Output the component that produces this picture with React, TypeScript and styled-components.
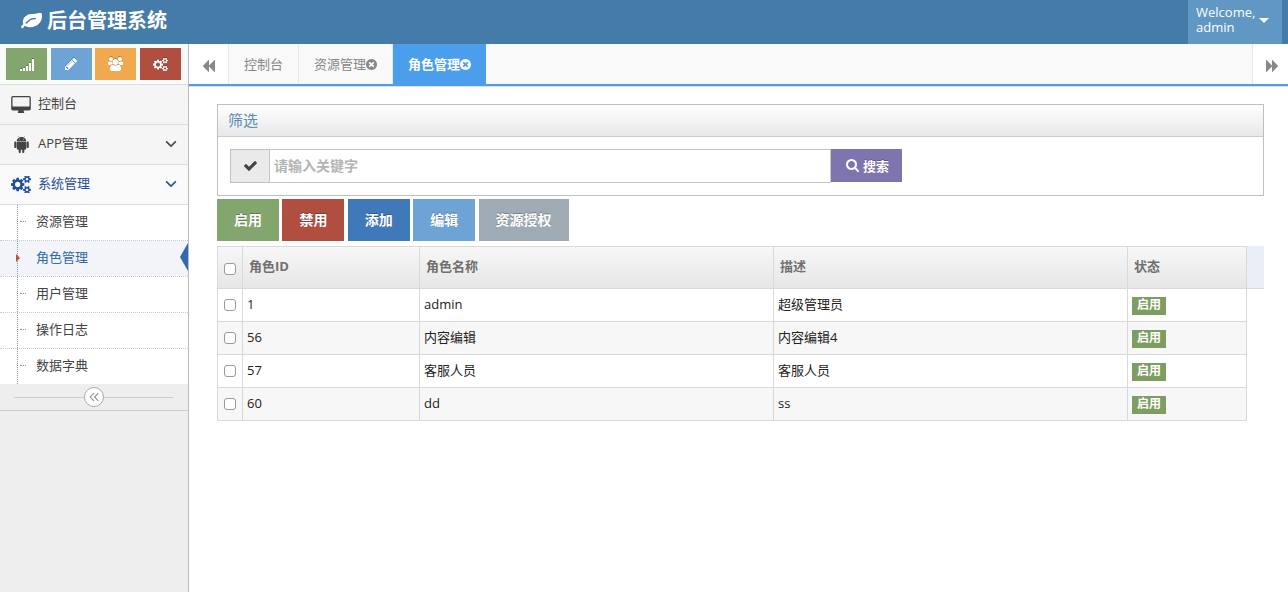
import React, { useState } from "react";
import styled, { createGlobalStyle, css } from "styled-components";

const GlobalStyle = createGlobalStyle`
  *, *::before, *::after { box-sizing: border-box; }
  body {
    margin: 0;
    background: #fff;
    color: #393939;
    font: 13px/20px "Open Sans", "Noto Sans CJK SC", sans-serif;
  }
  button, input { font: inherit; }
  button { border: 0; padding: 0; cursor: pointer; }
  a { color: inherit; text-decoration: none; }
  ul { list-style: none; margin: 0; padding: 0; }
`;

/* ---------- icons ---------- */

const icons = {
  leaf: {
    box: "0 256 1792 1408",
    d: "M1280 704q0-26-19-45t-45-19q-172 0-318 49.5t-259.5 134-235.5 219.5q-19 21-19 45 0 26 19 45t45 19q24 0 45-19 27-24 74-71t67-66q137-124 268.5-176t313.5-52q26 0 45-19t19-45zm512-198q0 95-20 193-46 224-184.5 383t-357.5 268q-214 108-438 108-148 0-286-47-15-5-88-42t-96-37q-16 0-39.5 32t-45 70-52.5 70-60 32q-43 0-63.5-17.5t-45.5-59.5q-2-4-6-11t-5.5-10-3-9.5-1.5-13.5q0-35 31-73.5t68-65.5 68-56 31-48q0-4-14-38t-16-44q-9-51-9-104 0-115 43.5-220t119-184.5 170.5-139 204-95.5q55-18 145-25.5t179.5-9 178.5-6 163.5-24 113.5-56.5l29.5-29.5 29.5-28 27-20 36.5-16 43.5-4.5q39 0 70.5 46t47.5 112 24 124 8 96z",
  },
  signal: {
    box: "0 0 14 13",
    d: "M0 11h2v2h-2zM3 10h2v3h-2zM6 8h2v5h-2zM9 5h2v8h-2zM12 1h2v12h-2z",
  },
  pencil: {
    box: "128 149 1515 1515",
    d: "M491 1536l91-91-235-235-91 91v107h128v128h107zm523-928q0-22-22-22-10 0-17 7l-542 542q-7 7-7 17 0 22 22 22 10 0 17-7l542-542q7-7 7-17zm-54-192l416 416-832 832h-416v-416zm683 96q0 53-37 90l-166 166-416-416 166-165q36-38 90-38 53 0 91 38l235 234q37 39 37 91z",
  },
  users: {
    box: "0 0 1920 1792",
    d: "M593 896q-162 5-265 128h-134q-82 0-138-40.5t-56-118.5q0-353 124-353 6 0 43.5 21t97.5 42.5 119 21.5q67 0 133-23-5 37-5 66 0 139 81 256zm1071 637q0 120-73 189.5t-194 69.5h-874q-121 0-194-69.5t-73-189.5q0-53 3.5-103.5t14-109 26.5-108.5 43-97.5 62-81 85.5-53.5 111.5-20q10 0 43 21.5t73 48 107 48 135 21.5 135-21.5 107-48 73-48 43-21.5q61 0 111.5 20t85.5 53.5 62 81 43 97.5 26.5 108.5 14 109 3.5 103.5zm-1024-1277q0 106-75 181t-181 75-181-75-75-181 75-181 181-75 181 75 75 181zm704 384q0 159-112.5 271.5t-271.5 112.5-271.5-112.5-112.5-271.5 112.5-271.5 271.5-112.5 271.5 112.5 112.5 271.5zm576 225q0 78-56 118.5t-138 40.5h-134q-103-123-265-128 81-117 81-256 0-29-5-66 66 23 133 23 59 0 119-21.5t97.5-42.5 43.5-21q124 0 124 353zm-128-609q0 106-75 181t-181 75-181-75-75-181 75-181 181-75 181 75 75 181z",
  },
  cogs: {
    box: "-64 96 1920 1600",
    d: "M832 896q0-106-75-181t-181-75-181 75-75 181 75 181 181 75 181-75 75-181zm768 512q0-52-38-90t-90-38-90 38-38 90q0 53 37.5 90.5t90.5 37.5 90.5-37.5 37.5-90.5zm0-1024q0-52-38-90t-90-38-90 38-38 90q0 53 37.5 90.5t90.5 37.5 90.5-37.5 37.5-90.5zm-384 421v185q0 10-7 19.5t-16 10.5l-155 24q-11 35-32 76 34 48 90 115 7 11 7 20 0 12-7 19-23 30-82.5 89.5t-78.5 59.5q-11 0-21-7l-115-90q-37 19-77 31-11 108-23 155-7 24-30 24h-186q-11 0-20-7.5t-10-17.5l-23-153q-34-10-75-31l-118 89q-7 7-20 7-11 0-21-8-144-133-144-160 0-9 7-19 10-14 41-53t47-61q-23-44-35-82l-152-24q-10-1-17-9.5t-7-19.5v-185q0-10 7-19.5t16-10.5l155-24q11-35 32-76-34-48-90-115-7-11-7-20 0-12 7-20 22-30 82-89t79-59q11 0 21 7l115 90q34-18 77-32 11-108 23-154 7-24 30-24h186q11 0 20 7.5t10 17.5l23 153q34 10 75 31l118-89q8-7 20-7 11 0 21 8 144 133 144 160 0 8-7 19-12 16-42 54t-45 60q23 48 34 82l152 23q10 2 17 10.5t7 19.5zm640 533v140q0 16-149 31-12 27-30 52 51 113 51 138 0 4-4 7-122 71-124 71-8 0-46-47t-52-68q-20 2-30 2t-30-2q-14 21-52 68t-46 47q-2 0-124-71-4-3-4-7 0-25 51-138-18-25-30-52-149-15-149-31v-140q0-16 149-31 13-29 30-52-51-113-51-138 0-4 4-7 4-2 35-20t59-34 30-16q8 0 46 46.5t52 67.5q20-2 30-2t30 2q51-71 92-112l6-2q4 0 124 70 4 3 4 7 0 25-51 138 17 23 30 52 149 15 149 31zm0-1024v140q0 16-149 31-12 27-30 52 51 113 51 138 0 4-4 7-122 71-124 71-8 0-46-47t-52-68q-20 2-30 2t-30-2q-14 21-52 68t-46 47q-2 0-124-71-4-3-4-7 0-25 51-138-18-25-30-52-149-15-149-31v-140q0-16 149-31 13-29 30-52-51-113-51-138 0-4 4-7 4-2 35-20t59-34 30-16q8 0 46 46.5t52 67.5q20-2 30-2t30 2q51-71 92-112l6-2q4 0 124 70 4 3 4 7 0 25-51 138 17 23 30 52 149 15 149 31z",
  },
  desktop: {
    box: "-64 0 1920 1664",
    d: "M1728 992v-832q0-13-9.5-22.5t-22.5-9.5h-1600q-13 0-22.5 9.5t-9.5 22.5v832q0 13 9.5 22.5t22.5 9.5h1600q13 0 22.5-9.5t9.5-22.5zm128-832v1088q0 66-47 113t-113 47h-544q0 37 16 77.5t32 71 16 43.5q0 26-19 45t-45 19h-512q-26 0-45-19t-19-45q0-14 16-44t32-70 16-78h-544q-66 0-113-47t-47-113v-1088q0-66 47-113t113-47h1600q66 0 113 47t47 113z",
  },
  android: {
    box: "32 32 384 448",
    d: "M89.6 204.5v115.8c0 15.4-12.1 27.7-27.5 27.7-15.3 0-30.1-12.4-30.1-27.7V204.5c0-15.1 14.8-27.5 30.1-27.5 15.1 0 27.5 12.4 27.5 27.5zm10.8 157c0 16.4 13.2 29.6 29.6 29.6h19.9l.3 61.1c0 36.9 55.2 36.6 55.2 0v-61.1h37.2v61.1c0 36.7 55.5 36.8 55.5 0v-61.1h20.2c16.2 0 29.4-13.2 29.4-29.6V182.1H100.4v179.4zm248-189.1H99.3c0-42.8 25.6-80 63.6-99.4l-19.1-35.3c-2.8-4.9 4.3-8 6.7-3.8l19.4 35.6c34.9-15.5 75-14.7 108.3 0L297.5 34c2.5-4.3 9.5-1.1 6.7 3.8L285.1 73c37.7 19.4 63.3 56.6 63.3 99.4zm-170.7-55.5c0-5.7-4.6-10.5-10.5-10.5-5.7 0-10.2 4.8-10.2 10.5s4.6 10.5 10.2 10.5c5.9 0 10.5-4.8 10.5-10.5zm113.4 0c0-5.7-4.6-10.5-10.2-10.5-5.9 0-10.5 4.8-10.5 10.5s4.6 10.5 10.5 10.5c5.6 0 10.2-4.8 10.2-10.5zm94.8 60.1c-15.1 0-27.5 12.1-27.5 27.5v115.8c0 15.4 12.4 27.7 27.5 27.7 15.4 0 30.1-12.4 30.1-27.7V204.5c0-15.4-14.8-27.5-30.1-27.5z",
  },
  check: {
    box: "121 334 1550 1188",
    d: "M1671 566q0 40-28 68l-724 724-136 136q-28 28-68 28t-68-28l-136-136-362-362q-28-28-28-68t28-68l136-136q28-28 68-28t68 28l294 295 656-657q28-28 68-28t68 28l136 136q28 28 28 68z",
  },
  search: {
    box: "64 128 1664 1664",
    d: "M1216 832q0-185-131.5-316.5t-316.5-131.5-316.5 131.5-131.5 316.5 131.5 316.5 316.5 131.5 316.5-131.5 131.5-316.5zm512 832q0 52-38 90t-90 38q-54 0-90-38l-343-342q-179 124-399 124-143 0-273.5-55.5t-225-150-150-225-55.5-273.5 55.5-273.5 150-225 225-150 273.5-55.5 273.5 55.5 225 150 150 225 55.5 273.5q0 220-124 399l343 343q37 37 37 90z",
  },
  close: {
    box: "128 128 1536 1536",
    d: "M1277 1122q0-26-19-45l-181-181 181-181q19-19 19-45 0-27-19-46l-90-90q-19-19-46-19-26 0-45 19l-181 181-181-181q-19-19-45-19-27 0-46 19l-90 90q-19 19-19 46 0 26 19 45l181 181-181 181q-19 19-19 45 0 27 19 46l90 90q19 19 46 19 26 0 45-19l181-181 181 181q19 19 45 19 27 0 46-19l90-90q19-19 19-46zm387-226q0 209-103 385.5t-279.5 279.5-385.5 103-385.5-103-279.5-279.5-103-385.5 103-385.5 279.5-279.5 385.5-103 385.5 103 279.5 279.5 103 385.5z",
  },
  backward: { box: "0 0 12 12", d: "M6 0v5.5L11.5 0H12v12h-.5L6 6.500V12h-.4L0 6.200v-.4L5.600 0z" },
  forward: { box: "0 0 12 12", d: "M6 0v5.5L.5 0H0v12h.5L6 6.500V12h.4L12 6.200v-.4L6.400 0z" },
  caret: { box: "0 0 10 5", d: "M0 0h10l-5 5z" },
  chevron: { box: "0 0 12 8", d: "M1.700 .8L6 5.100 10.300.8l1.100 1.100L6 7.300.6 1.900z" },
  collapse: {
    box: "0 0 10 10",
    d: "M4.700.8L.5 5l4.200 4.200.7-.7L1.900 5l3.500-3.500zM9 .8L4.800 5 9 9.200l.7-.7L6.200 5l3.500-3.500z",
  },
};

type IconName = keyof typeof icons;

const Glyph = styled.svg`
  display: block;
  flex: none;
  fill: currentColor;
`;

const Icon = ({ name, w, h }: { name: IconName; w: number; h: number }) => (
  <Glyph width={w} height={h} viewBox={icons[name].box} aria-hidden="true">
    <path d={icons[name].d} />
  </Glyph>
);

/* ---------- page frame ---------- */

const Page = styled.div`
  min-height: 100vh;
  display: flex;
  flex-direction: column;
`;

const Navbar = styled.header`
  height: 44px;
  padding: 0 6px 0 21px;
  display: flex;
  justify-content: space-between;
  align-items: stretch;
  background: #457ba8;
  color: #fff;
`;

const Brand = styled.a`
  display: flex;
  align-items: center;
  gap: 5px;
  padding-bottom: 2px;
  font-size: 20px;
  font-weight: 700;
`;

const UserMenu = styled.button`
  width: 94px;
  padding: 0 13px 4px 8px;
  display: flex;
  align-items: center;
  justify-content: space-between;
  background: #6097c3;
  color: #fff;
  line-height: 15px;
  text-align: left;
`;

const UserName = styled.span`
  width: 56px;
`;

const Body = styled.div`
  flex: 1;
  display: flex;
`;

/* ---------- sidebar ---------- */

const Sidebar = styled.aside`
  flex: none;
  width: 189px;
  border-right: 1px solid #bbb;
  background: #eee;
`;

const Shortcuts = styled.div`
  height: 40px;
  padding: 0 7px 0 6px;
  display: flex;
  align-items: center;
  justify-content: space-between;
  background: #fafafa;
`;

const Shortcut = styled.button<{ $color: string }>`
  width: 41px;
  height: 32px;
  display: flex;
  align-items: center;
  justify-content: center;
  background: ${(p) => p.$color};
  color: #fff;

  svg { filter: drop-shadow(0 -1px 0 rgba(0, 0, 0, 0.25)); }
`;

const MenuLink = styled.a<{ $open?: boolean }>`
  height: 40px;
  padding: 0 11px 2px;
  display: flex;
  align-items: center;
  border-top: 1px solid #ddd;
  background: ${(p) => (p.$open ? "#fafafa" : "#f5f5f5")};
  color: ${(p) => (p.$open ? "#1f4f96" : "#444")};
`;

const MenuIcon = styled.span`
  width: 20px;
  margin-right: 7px;
  padding-top: 2px;
  display: flex;
  justify-content: center;
`;

const MenuLabel = styled.span`
  flex: 1;
  padding-bottom: 2px;
`;

const Submenu = styled.ul`
  position: relative;
  border-top: 1px solid #ddd;
  background: #fff;

  &::before {
    content: "";
    position: absolute;
    z-index: 1;
    top: 0;
    bottom: 0;
    left: 17px;
    border-left: 1px dotted #8397a8;
  }
`;

const SubmenuLink = styled.a<{ $active?: boolean }>`
  position: relative;
  height: 36px;
  padding: 0 0 4px 36px;
  display: flex;
  align-items: center;
  border-top: 1px dotted #ccc;
  color: #444;

  li:first-child > & {
    height: 35px;
    border-top: 0;
  }

  ${(p) =>
    p.$active
      ? css`
          background: #f2f4f9;
          color: #2f69ab;

          &::before {
            content: "";
            position: absolute;
            z-index: 2;
            left: 16px;
            top: 13px;
            border: 4px solid transparent;
            border-left-color: #c0502f;
            border-right-width: 0;
          }

          &::after {
            content: "";
            position: absolute;
            right: 0;
            top: 2px;
            border: 14px solid transparent;
            border-right: 8px solid #2f6bad;
            border-left-width: 0;
          }
        `
      : css`
          &::before {
            content: "";
            position: absolute;
            left: 20px;
            top: 16px;
            width: 6px;
            border-top: 1px dotted #8397a8;
          }
        `}
`;

const CollapseBar = styled.div`
  height: 27px;
  padding: 0 15px 0 14px;
  display: flex;
  align-items: center;
  border-bottom: 1px solid #ccc;

  &::before,
  &::after {
    content: "";
    flex: 1;
    border-top: 1px solid #ccc;
  }
`;

const CollapseButton = styled.button`
  width: 20px;
  height: 20px;
  display: flex;
  align-items: center;
  justify-content: center;
  border: 1px solid #aaa;
  border-radius: 50%;
  background: #fff;
  color: #888;
`;

/* ---------- tabs ---------- */

const Main = styled.main`
  flex: 1;
  min-width: 0;
`;

const TabBar = styled.nav`
  height: 43px;
  display: flex;
  border-bottom: 1px solid #ddd;
  background: #f9f9f9;
  box-shadow: inset 0 -2px 0 #4a9eec;
  padding-bottom: 2px;
`;

const ScrollButton = styled.button<{ $side: "left" | "right" }>`
  width: ${(p) => (p.$side === "left" ? 40 : 36)}px;
  padding-top: 4px;
  display: flex;
  align-items: center;
  justify-content: center;
  background: #fff;
  color: #888;
  ${(p) =>
    p.$side === "left"
      ? "border-right: 1px solid #e7e7e7;"
      : "border-left: 1px solid #e7e7e7; margin-left: auto; padding-left: 2px;"}
`;

const Tab = styled.div<{ $active?: boolean }>`
  padding: 0 15px;
  display: flex;
  align-items: center;
  border-right: ${(p) => (p.$active ? "0" : "1px solid #e7e7e7")};
  background: ${(p) => (p.$active ? "#4a9eec" : "transparent")};
  color: ${(p) => (p.$active ? "#fff" : "#888")};
  font-weight: ${(p) => (p.$active ? 700 : 400)};
`;

const TabClose = styled.button`
  background: none;
  color: inherit;
`;

/* ---------- content ---------- */

const Content = styled.div`
  padding: 17px 24px 24px 28px;
`;

const Panel = styled.section`
  border: 1px solid #bfbfbf;
`;

const PanelTitle = styled.h2`
  height: 32px;
  margin: 0;
  padding: 0 10px;
  border-bottom: 1px solid #ccc;
  background: linear-gradient(#fff, #e8e8e8);
  color: #5a8cb8;
  font-size: 15px;
  font-weight: 400;
  line-height: 30px;
`;

const SearchForm = styled.form`
  padding: 12px;
  display: flex;
  align-items: flex-start;
`;

const Addon = styled.label`
  width: 39px;
  height: 34px;
  display: flex;
  align-items: center;
  justify-content: center;
  border: 1px solid #c0c0c0;
  border-right: 0;
  background: #eaeaea;
  color: #444;
`;

const Keyword = styled.input`
  width: 562px;
  min-width: 0;
  height: 34px;
  padding: 0 4px 2px;
  border: 1px solid #c6c6c6;
  border-radius: 0;
  outline: 0;
  font-size: 14px;

  &::placeholder {
    color: #b4b4b4;
    font-weight: 700;
  }
`;

const SearchButton = styled.button`
  height: 33px;
  padding: 0 13px 0 15px;
  display: flex;
  align-items: center;
  gap: 4px;
  background: #7e74ae;
  color: #fff;
  font-weight: 700;
  text-shadow: 0 -1px 0 rgba(0, 0, 0, 0.25);
  white-space: nowrap;
`;

const Actions = styled.div`
  margin: 3px 0 5px;
  line-height: 0;
`;

const Action = styled.button<{ $color: string }>`
  height: 42px;
  padding: 0 17px;
  background: ${(p) => p.$color};
  color: #fff;
  font-size: 14px;
  font-weight: 700;
  line-height: 42px;
  text-shadow: 0 -1px 0 rgba(0, 0, 0, 0.25);
  vertical-align: top;
`;

/* The header strip runs on past the table, over the width kept for a scroll bar. */
const Grid = styled.div`
  position: relative;
  padding-right: 17px;
  background: linear-gradient(#eaeef7, #eaeef7) no-repeat 0 0 / 100% 42px,
    linear-gradient(#d9d9d9, #d9d9d9) no-repeat 0 42px / 100% 1px;
`;

const Table = styled.table`
  width: 100%;
  table-layout: fixed;
  border-collapse: separate;
  border-spacing: 0;
  border-top: 1px solid #d9d9d9;
  border-left: 1px solid #d9d9d9;
  color: #222;
`;

const HeadRow = styled.tr`
  height: 42px;
  background: linear-gradient(#f7f7f7, #e6e6e6);
`;

const HeadCell = styled.th<{ $width?: number }>`
  width: ${(p) => (p.$width ? `${p.$width}px` : "auto")};
  padding: 0 6px 4px;
  border-right: 1px solid #d9d9d9;
  border-bottom: 1px solid #d9d9d9;
  color: #707070;
  font-weight: 700;
  text-align: left;
`;

const Row = styled.tr`
  height: 33px;
  background: #fff;

  &:nth-child(even) { background: #f7f7f7; }
`;

const Cell = styled.td`
  padding: 0 4px 2px;
  border-right: 1px solid #d9d9d9;
  border-bottom: 1px solid #d9d9d9;
`;

const Tick = styled.input`
  appearance: none;
  display: block;
  width: 12px;
  height: 12px;
  margin: 2px auto 0;
  border: 1px solid #999;
  border-radius: 3px;
  background: #fff;

  &:checked { background: #457ba8; }
  th > & { margin-top: 7px; }
`;

const Status = styled.span`
  display: block;
  width: max-content;
  margin-top: 4px;
  padding: 0 5px 2px;
  background: #7e9d60;
  color: #fff;
  font-size: 12px;
  font-weight: 700;
  line-height: 16px;
`;

/* ---------- data ---------- */

const shortcuts: { icon: IconName; label: string; color: string; w: number; h: number }[] = [
  { icon: "signal", label: "统计", color: "#82a66d", w: 14, h: 13 },
  { icon: "pencil", label: "编辑", color: "#6ea3d6", w: 12, h: 12 },
  { icon: "users", label: "用户", color: "#f0a94e", w: 15, h: 14 },
  { icon: "cogs", label: "设置", color: "#b04e40", w: 15, h: 13 },
];

const submenu = ["资源管理", "角色管理", "用户管理", "操作日志", "数据字典"];

const tabs = [
  { label: "控制台", closable: false },
  { label: "资源管理", closable: true },
  { label: "角色管理", closable: true },
];

const actions = [
  { label: "启用", color: "#82a66d" },
  { label: "禁用", color: "#b04e40" },
  { label: "添加", color: "#4079ba" },
  { label: "编辑", color: "#6ea3d6" },
  { label: "资源授权", color: "#9eabb4" },
];

const roles = [
  { id: 1, name: "admin", note: "超级管理员" },
  { id: 56, name: "内容编辑", note: "内容编辑4" },
  { id: 57, name: "客服人员", note: "客服人员" },
  { id: 60, name: "dd", note: "ss" },
];

export default function App() {
  const [selected, setSelected] = useState<number[]>([]);
  const toggle = (id: number) =>
    setSelected((s) => (s.includes(id) ? s.filter((x) => x !== id) : [...s, id]));
  const allSelected = selected.length === roles.length;

  return (
    <Page>
      <GlobalStyle />
      <Navbar>
        <Brand href="#">
          <Icon name="leaf" w={21} h={17} />
          后台管理系统
        </Brand>
        <UserMenu type="button">
          <UserName>Welcome, admin</UserName>
          <Icon name="caret" w={10} h={5} />
        </UserMenu>
      </Navbar>

      <Body>
        <Sidebar>
          <Shortcuts>
            {shortcuts.map((s) => (
              <Shortcut key={s.icon} type="button" aria-label={s.label} $color={s.color}>
                <Icon name={s.icon} w={s.w} h={s.h} />
              </Shortcut>
            ))}
          </Shortcuts>
          <ul>
            <li>
              <MenuLink href="#">
                <MenuIcon><Icon name="desktop" w={20} h={17} /></MenuIcon>
                <MenuLabel>控制台</MenuLabel>
              </MenuLink>
            </li>
            <li>
              <MenuLink href="#">
                <MenuIcon><Icon name="android" w={15} h={17} /></MenuIcon>
                <MenuLabel>APP管理</MenuLabel>
                <Icon name="chevron" w={12} h={8} />
              </MenuLink>
            </li>
            <li>
              <MenuLink href="#" $open>
                <MenuIcon><Icon name="cogs" w={20} h={17} /></MenuIcon>
                <MenuLabel>系统管理</MenuLabel>
                <Icon name="chevron" w={12} h={8} />
              </MenuLink>
              <Submenu>
                {submenu.map((label) => (
                  <li key={label}>
                    <SubmenuLink href="#" $active={label === "角色管理"}>{label}</SubmenuLink>
                  </li>
                ))}
              </Submenu>
            </li>
          </ul>
          <CollapseBar>
            <CollapseButton type="button" aria-label="收起菜单">
              <Icon name="collapse" w={10} h={10} />
            </CollapseButton>
          </CollapseBar>
        </Sidebar>

        <Main>
          <TabBar>
            <ScrollButton type="button" aria-label="向左" $side="left">
              <Icon name="backward" w={12} h={12} />
            </ScrollButton>
            {tabs.map((t) => (
              <Tab key={t.label} $active={t.label === "角色管理"}>
                <a href="#">{t.label}</a>
                {t.closable && (
                  <TabClose type="button" aria-label={`关闭${t.label}`}>
                    <Icon name="close" w={11} h={11} />
                  </TabClose>
                )}
              </Tab>
            ))}
            <ScrollButton type="button" aria-label="向右" $side="right">
              <Icon name="forward" w={12} h={12} />
            </ScrollButton>
          </TabBar>

          <Content>
            <Panel>
              <PanelTitle>筛选</PanelTitle>
              <SearchForm onSubmit={(e) => e.preventDefault()}>
                <Addon htmlFor="keyword"><Icon name="check" w={13} h={10} /></Addon>
                <Keyword id="keyword" type="text" placeholder="请输入关键字" aria-label="关键字" />
                <SearchButton type="submit">
                  <Icon name="search" w={13} h={13} />
                  搜索
                </SearchButton>
              </SearchForm>
            </Panel>

            <Actions>
              {actions.map((a) => (
                <React.Fragment key={a.label}>
                  <Action type="button" $color={a.color}>{a.label}</Action>{" "}
                </React.Fragment>
              ))}
            </Actions>

            <Grid>
              <Table>
                <thead>
                  <HeadRow>
                    <HeadCell $width={25}>
                      <Tick
                        type="checkbox"
                        aria-label="全选"
                        checked={allSelected}
                        onChange={() => setSelected(allSelected ? [] : roles.map((r) => r.id))}
                      />
                    </HeadCell>
                    <HeadCell $width={177}>角色ID</HeadCell>
                    <HeadCell>角色名称</HeadCell>
                    <HeadCell>描述</HeadCell>
                    <HeadCell $width={119}>状态</HeadCell>
                  </HeadRow>
                </thead>
                <tbody>
                  {roles.map((r) => (
                    <Row key={r.id}>
                      <Cell>
                        <Tick
                          type="checkbox"
                          aria-label={`选择${r.name}`}
                          checked={selected.includes(r.id)}
                          onChange={() => toggle(r.id)}
                        />
                      </Cell>
                      <Cell>{r.id}</Cell>
                      <Cell>{r.name}</Cell>
                      <Cell>{r.note}</Cell>
                      <Cell><Status>启用</Status></Cell>
                    </Row>
                  ))}
                </tbody>
              </Table>
            </Grid>
          </Content>
        </Main>
      </Body>
    </Page>
  );
}
